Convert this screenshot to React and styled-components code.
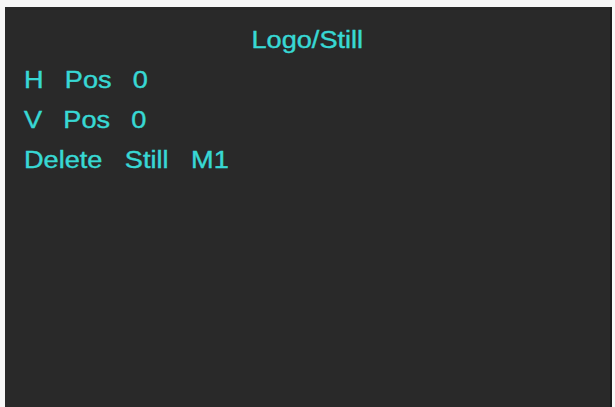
import React from 'react'
import styled, { createGlobalStyle } from 'styled-components'

const GlobalStyle = createGlobalStyle`
  html, body {
    margin: 0;
    padding: 0;
    background: #f7f7f7;
    overflow: hidden;
  }
`;

const Screen = styled.div`
  margin: 7px 0 0 5px;
  width: 607px;
  height: 400px;
  background: #292929;
  box-sizing: border-box;
  border-right: 2px solid #1c1c1c;
  padding: 13px 0 0 19px;
  font-family: "Liberation Sans", Arial, sans-serif;
  font-size: 23px;
  line-height: 40px;
  color: #38d8d4;
  -webkit-text-stroke: 0.4px #38d8d4;
`;

const Title = styled.div`
  display: flex;
  justify-content: center;
  margin-left: -19px;
  span {
    display: inline-block;
    transform: scaleX(1.18);
  }
`;

const Row = styled.div`
  display: flex;
  width: fit-content;
  gap: ${p => p.$gap || 19}px;
  transform: scaleX(1.18);
  transform-origin: left center;
  white-space: nowrap;
`;

const rows = [
  { words: ['H', 'Pos', '0'], gap: 18 },
  { words: ['V', 'Pos', '0'], gap: 18 },
  { words: ['Delete', 'Still', 'M1'], gap: 19 },
]

const App = () => {
  return (
    <>
      <GlobalStyle />
      <Screen>
        <Title><span>Logo/Still</span></Title>
        {rows.map((r, i) => (
          <Row key={i} $gap={r.gap}>
            {r.words.map(w => <span key={w}>{w}</span>)}
          </Row>
        ))}
      </Screen>
    </>
  )
}

export default App
